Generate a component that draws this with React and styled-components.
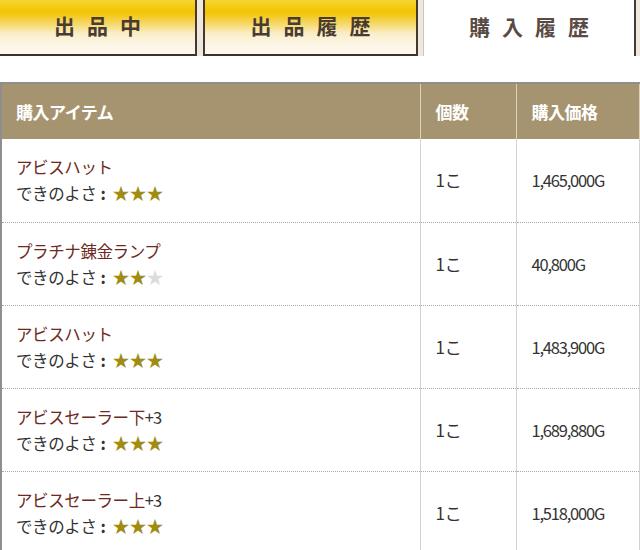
import React from "react";
import styled, { createGlobalStyle } from "styled-components";

const Global = createGlobalStyle`
  html, body { margin: 0; padding: 0; background: #fff; }
  body { font-family: "Noto Sans CJK JP", "Noto Sans", sans-serif; overflow: hidden; }
`;

const Page = styled.div`
  width: 640px;
`;

const TabBar = styled.div`
  display: flex;
  height: 56px;
  background: #eee8de;
`;

const Tab = styled.div`
  box-sizing: border-box;
  width: ${(p) => p.$w}px;
  margin-right: ${(p) => p.$gap}px;
  display: flex;
  align-items: center;
  justify-content: center;
  padding-bottom: 4px;
  font-size: 21px;
  font-weight: 700;
  letter-spacing: 12px;
  text-indent: 12px;
  color: ${(p) => (p.$active ? "#5a4a44" : "#4a3b32")};
  background: ${(p) =>
    p.$active
      ? "#fff"
      : "linear-gradient(#f8d530 0%, #f2c300 22%, #f5d65e 42%, #faeec8 62%, #fdf6e6 82%, #fdf8ef 100%)"};
  border-left: ${(p) => (p.$first ? "none" : p.$active ? "1px solid #cfc6bb" : "2px solid #46382f")};
  border-right: 2px solid #46382f;
  border-bottom: ${(p) => (p.$active ? "none" : "2px solid #3e332c")};
`;

const Table = styled.table`
  margin-top: 26px;
  width: 640px;
  border-collapse: collapse;
  border-top: 2px solid #8e8e8e;
  border-left: 2px solid #8e8e8e;
  table-layout: fixed;
`;

const Th = styled.th`
  height: 56px;
  box-sizing: border-box;
  padding: 0 0 0 ${(p) => p.$pad || 15}px;
  text-align: left;
  background: #a5946f;
  color: #fff;
  font-size: 17px;
  font-weight: 700;
  letter-spacing: -0.5px;
  border-right: 1px solid #d9d0bf;
`;

const Td = styled.td`
  height: 83px;
  box-sizing: border-box;
  padding: 0 0 0 ${(p) => p.$pad || 15}px;
  vertical-align: middle;
  border-right: 1px solid #d8d2c6;
  border-bottom: 1px dotted #aaaaaa;
  font-size: 16.5px;
  line-height: 26px;
  color: #333;
`;

const Name = styled.div`
  color: #6e2a22;
  letter-spacing: -0.4px;
`;

const Plus = styled.span`
  color: #333;
  letter-spacing: -1px;
`;

const Quality = styled.div`
  display: flex;
  align-items: center;
  color: #333;
  letter-spacing: -0.4px;
`;

const Colon = styled.span`
  margin: 0 7px 0 4px;
  font-weight: 700;
`;

const Star = styled.span`
  color: ${(p) => (p.$on ? "#a08c12" : "#dcdcdc")};
  font-size: 17px;
  letter-spacing: 0;
`;

const Count = styled.span`
  font-size: 17px;
  letter-spacing: -0.3px;
`;

const Price = styled.span`
  font-size: 16.5px;
  letter-spacing: -1.2px;
`;

const rows = [
  { name: "アビスハット", plus: "", stars: 3, price: "1,465,000G" },
  { name: "プラチナ錬金ランプ", plus: "", stars: 2, price: "40,800G" },
  { name: "アビスハット", plus: "", stars: 3, price: "1,483,900G" },
  { name: "アビスセーラー下", plus: "+3", stars: 3, price: "1,689,880G" },
  { name: "アビスセーラー上", plus: "+3", stars: 3, price: "1,518,000G" },
];

export default function App() {
  return (
    <Page>
      <Global />
      <TabBar>
        <Tab $first $w={197} $gap={6}>出品中</Tab>
        <Tab $w={215} $gap={5}>出品履歴</Tab>
        <Tab $active $w={213} $gap={0}>購入履歴</Tab>
      </TabBar>
      <Table>
        <colgroup>
          <col style={{ width: 419 }} />
          <col style={{ width: 96 }} />
          <col />
        </colgroup>
        <thead>
          <tr>
            <Th $pad={14}>購入アイテム</Th>
            <Th>個数</Th>
            <Th>購入価格</Th>
          </tr>
        </thead>
        <tbody>
          {rows.map((r, i) => (
            <tr key={i}>
              <Td $pad={14}>
                <Name>
                  {r.name}
                  {r.plus && <Plus>{r.plus}</Plus>}
                </Name>
                <Quality>
                  <span>できのよさ</span>
                  <Colon>:</Colon>
                  {[0, 1, 2].map((s) => (
                    <Star key={s} $on={s < r.stars}>★</Star>
                  ))}
                </Quality>
              </Td>
              <Td>
                <Count>1こ</Count>
              </Td>
              <Td>
                <Price>{r.price}</Price>
              </Td>
            </tr>
          ))}
        </tbody>
      </Table>
    </Page>
  );
}
